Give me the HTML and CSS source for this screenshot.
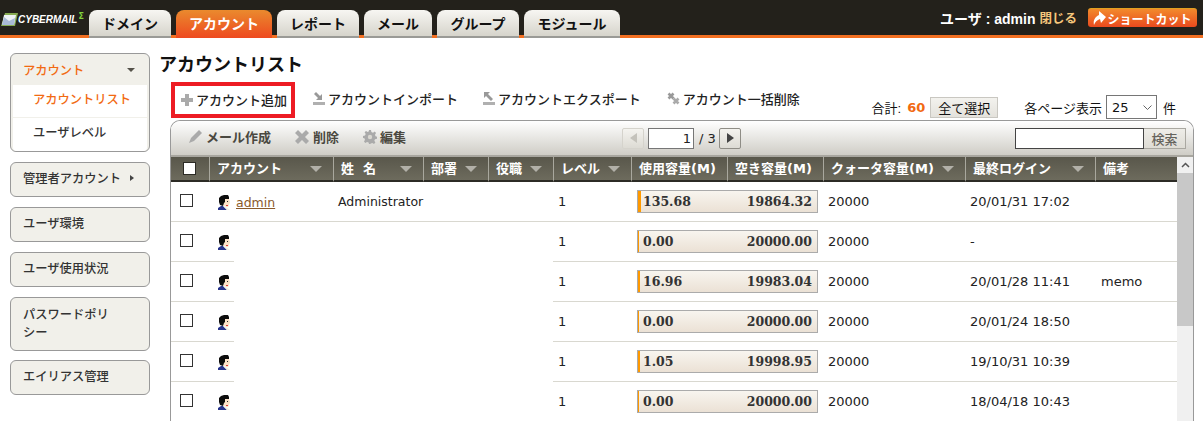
FILE: index.html
```html
<!DOCTYPE html>
<html lang="ja">
<head>
<meta charset="utf-8">
<title>アカウントリスト</title>
<link rel="stylesheet" href="styles.css">
</head>
<body>
<div class="page">
  <header class="topbar">
    <div class="logo">
      <svg class="logo-mark" width="17" height="14" viewBox="0 0 17 14"><path d="M4 0h13l-3 13H0z" fill="#86ab52"/><path d="M3 2h12l-2 10H1z" fill="#eef2f6"/><path d="M1 12L3 4l5 4 6-3-1 7z" fill="#a9bad6"/></svg>
      <span class="logo-text">CYBERMAIL</span><span class="logo-sigma">Σ</span>
    </div>
    <nav class="tabs">
      <a class="tab tab-w82">ドメイン</a>
      <a class="tab tab-w96 active">アカウント</a>
      <a class="tab tab-w82">レポート</a>
      <a class="tab tab-w68">メール</a>
      <a class="tab tab-w82">グループ</a>
      <a class="tab tab-w96">モジュール</a>
    </nav>
    <div class="userbox">
      <span class="username">ユーザ : admin</span>
      <a class="logout">閉じる</a>
      <a class="shortcut">
        <svg width="13" height="14" viewBox="0 0 13 14"><path d="M1 14C0 9 2 6 6 4V0l7 6-5 6-1-4C4 9 2 11 1 14z" fill="#fff"/></svg>
        ショートカット
      </a>
    </div>
  </header>

  <div class="layout">
    <aside class="sidebar">
      <div class="side-group">
        <div class="side-head current"><span>アカウント</span><i class="caret-down"></i></div>
        <a class="side-sub current">アカウントリスト</a>
        <a class="side-sub">ユーザレベル</a>
      </div>
      <div class="side-group side-btn">管理者アカウント<i class="caret-right"></i></div>
      <div class="side-group side-btn">ユーザ環境</div>
      <div class="side-group side-btn">ユーザ使用状況</div>
      <div class="side-group side-btn side-tall">パスワードポリシー</div>
      <div class="side-group side-btn side-last">エイリアス管理</div>
    </aside>

    <main class="main">
      <h1 class="title">アカウントリスト</h1>
      <div class="actions-row">
        <div class="actions">
          <a class="action action-add">
            <svg width="12" height="12" viewBox="0 0 12 12"><path d="M4 0h4v4h4v4H8v4H4V8H0V4h4z" fill="#aaa"/></svg>アカウント追加
          </a>
          <a class="action">
            <svg width="12" height="13" viewBox="0 0 12 13"><path d="M1 2L3 0l4 4 2-2v6H3l2-2z" fill="#999"/><rect y="10" width="12" height="3" fill="#b0b0b0"/></svg>アカウントインポート
          </a>
          <a class="action">
            <svg width="12" height="13" viewBox="0 0 12 13"><path d="M1 0h6L5 2l5 5-2 2-5-5-2 2z" fill="#999"/><rect y="10" width="12" height="3" fill="#b0b0b0"/></svg>アカウントエクスポート
          </a>
          <a class="action">
            <svg width="13" height="13" viewBox="0 0 13 13"><path d="M1.500 1.500l5 5M6.500 1.500l-5 5" stroke="#999" stroke-width="2.600" fill="none"/><path d="M6.500 6.500l5 5M11.500 6.500l-5 5" stroke="#aaa" stroke-width="2.600" fill="none"/></svg>アカウント一括削除
          </a>
        </div>
        <div class="totals">
          <span class="total-label">合計:</span><b class="total-num">60</b>
          <button class="select-all">全て選択</button>
          <label class="per-page">各ページ表示</label>
          <span class="select-wrap">
            <select class="page-size"><option>25</option></select>
            <svg class="chevron" width="9" height="5" viewBox="0 0 9 5"><path d="M.5.500l4 4 4-4" fill="none" stroke="#666"/></svg>
          </span>
          <span class="unit">件</span>
        </div>
      </div>

      <section class="panel">
        <div class="panel-tools">
          <div class="tools-left">
            <a class="tool tool-mail"><svg width="15" height="15" viewBox="0 0 15 15"><path d="M11 1l3 3-8 8-5 2 2-5z" fill="#aaa"/></svg>メール作成</a>
            <a class="tool tool-del"><svg width="14" height="14" viewBox="0 0 14 14"><path d="M3 0l4 4 4-4 3 3-4 4 4 4-3 3-4-4-4 4-3-3 4-4-4-4z" fill="#aaa"/></svg>削除</a>
            <a class="tool"><svg width="14" height="14" viewBox="0 0 14 14"><path d="M6 0h2l.4 2 1.600.7L11.800 1.600 13 3l-1 1.700.5 1.500 1.500.600v2l-2 .4-.7 1.600 1.100 1.800L11 14l-1.700-1-1.500.5L7.200 14H6l-.4-1.500-1.600-.6-1.700 1L1 11.500l1-1.700L1.400 8.300 0 8V6l2-.4.700-1.600L1.600 2.200 3 1l1.700 1 1-.5z" fill="#aaa"/><circle cx="7" cy="7" r="2.200" fill="#dad8d1"/></svg>編集</a>
          </div>
          <div class="pager">
            <button class="page-btn disabled"><i class="tri-left"></i></button>
            <input class="page-input" value="1">
            <span class="page-total">/ 3</span>
            <button class="page-btn"><i class="tri-right"></i></button>
          </div>
          <div class="search">
            <input class="search-input">
            <button class="search-btn">検索</button>
          </div>
        </div>

        <div class="grid">
          <table class="list">
            <colgroup>
              <col class="c-check"><col class="c-account"><col class="c-name"><col class="c-dept"><col class="c-role"><col class="c-level"><col class="c-used"><col class="c-free"><col class="c-quota"><col class="c-login"><col class="c-memo">
            </colgroup>
            <thead>
              <tr>
                <th class="th-check"><input type="checkbox" class="check check-head"></th>
                <th><div class="th-in">アカウント<i class="sort"></i></div></th>
                <th><div class="th-in">姓&nbsp;&nbsp;名<i class="sort"></i></div></th>
                <th><div class="th-in">部署<i class="sort"></i></div></th>
                <th><div class="th-in">役職<i class="sort"></i></div></th>
                <th><div class="th-in">レベル<i class="sort"></i></div></th>
                <th><div class="th-in">使用容量(M)</div></th>
                <th><div class="th-in">空き容量(M)</div></th>
                <th><div class="th-in">クォータ容量(M)<i class="sort"></i></div></th>
                <th><div class="th-in">最終ログイン<i class="sort"></i></div></th>
                <th><div class="th-in">備考</div></th>
              </tr>
            </thead>
            <tbody>
              <tr>
                <td class="td-check"><input type="checkbox" class="check"></td>
                <td class="td-account"><svg class="person" width="13" height="15" viewBox="0 0 13 15"><use href="#person"/></svg><a class="user-link">admin</a></td>
                <td class="td-name">Administrator</td><td></td><td></td>
                <td class="td-level">1</td>
                <td colspan="2" class="td-bar"><div class="bar"><i class="bar-fill" style="width:3px"></i><span>135.68</span><span>19864.32</span></div></td>
                <td class="td-quota">20000</td><td class="td-login">20/01/31 17:02</td><td class="td-memo"></td>
              </tr>
              <tr>
                <td class="td-check"><input type="checkbox" class="check"></td>
                <td class="td-account masked"><svg class="person" width="13" height="15" viewBox="0 0 13 15"><use href="#person"/></svg></td>
                <td class="blank"></td><td class="blank"></td><td class="blank"></td>
                <td class="td-level">1</td>
                <td colspan="2" class="td-bar"><div class="bar"><i class="bar-fill" style="width:1px"></i><span>0.00</span><span>20000.00</span></div></td>
                <td class="td-quota">20000</td><td class="td-login">-</td><td class="td-memo"></td>
              </tr>
              <tr>
                <td class="td-check"><input type="checkbox" class="check"></td>
                <td class="td-account masked"><svg class="person" width="13" height="15" viewBox="0 0 13 15"><use href="#person"/></svg></td>
                <td class="blank"></td><td class="blank"></td><td class="blank"></td>
                <td class="td-level">1</td>
                <td colspan="2" class="td-bar"><div class="bar"><i class="bar-fill" style="width:2px"></i><span>16.96</span><span>19983.04</span></div></td>
                <td class="td-quota">20000</td><td class="td-login">20/01/28 11:41</td><td class="td-memo">memo</td>
              </tr>
              <tr>
                <td class="td-check"><input type="checkbox" class="check"></td>
                <td class="td-account masked"><svg class="person" width="13" height="15" viewBox="0 0 13 15"><use href="#person"/></svg></td>
                <td class="blank"></td><td class="blank"></td><td class="blank"></td>
                <td class="td-level">1</td>
                <td colspan="2" class="td-bar"><div class="bar"><i class="bar-fill" style="width:1px"></i><span>0.00</span><span>20000.00</span></div></td>
                <td class="td-quota">20000</td><td class="td-login">20/01/24 18:50</td><td class="td-memo"></td>
              </tr>
              <tr>
                <td class="td-check"><input type="checkbox" class="check"></td>
                <td class="td-account masked"><svg class="person" width="13" height="15" viewBox="0 0 13 15"><use href="#person"/></svg></td>
                <td class="blank"></td><td class="blank"></td><td class="blank"></td>
                <td class="td-level">1</td>
                <td colspan="2" class="td-bar"><div class="bar"><i class="bar-fill" style="width:2px"></i><span>1.05</span><span>19998.95</span></div></td>
                <td class="td-quota">20000</td><td class="td-login">19/10/31 10:39</td><td class="td-memo"></td>
              </tr>
              <tr>
                <td class="td-check"><input type="checkbox" class="check"></td>
                <td class="td-account masked"><svg class="person" width="13" height="15" viewBox="0 0 13 15"><use href="#person"/></svg></td>
                <td class="blank"></td><td class="blank"></td><td class="blank"></td>
                <td class="td-level">1</td>
                <td colspan="2" class="td-bar"><div class="bar"><i class="bar-fill" style="width:1px"></i><span>0.00</span><span>20000.00</span></div></td>
                <td class="td-quota">20000</td><td class="td-login">18/04/18 10:43</td><td class="td-memo"></td>
              </tr>
            </tbody>
          </table>
          <div class="scrollbar">
            <div class="scroll-up"><svg width="9" height="6" viewBox="0 0 9 6"><path d="M1 5l3.500-3.500L8 5" fill="none" stroke="#555" stroke-width="1.500"/></svg></div>
            <div class="scroll-thumb"></div>
          </div>
        </div>
      </section>
    </main>
  </div>
</div>
<svg class="defs" width="0" height="0">
  <symbol id="person" viewBox="0 0 13 15">
    <path d="M6 4h5l1 3-1 3-1 2H8l-3-2z" fill="#fde3c8"/>
    <path d="M0 15v-2l3-2h2l3 3 1 1z" fill="#27348b"/>
    <path d="M5 11l3 1 4 3H9z" fill="#f4f1e6"/>
    <path d="M2 10L1 7V3l2-2 3-1h4l1 2v2H7v3L6 8l-1 3z" fill="#0c0c0c"/>
    <rect x="8" y="10" width="2" height="1" fill="#e0413a"/>
    <rect x="9" y="6" width="1" height="1" fill="#222"/>
  </symbol>
</svg>
</body>
</html>
```
FILE: styles.css
```css
* { box-sizing: border-box; }
html, body { margin: 0; height: 100%; overflow: hidden; background: #fff; }
body {
  font-family: "DejaVu Sans", "Noto Sans CJK JP", sans-serif;
  font-size: 13px;
  color: #222;
}
a { color: inherit; text-decoration: none; }
i { display: block; font-style: normal; }
.page { height: 421px; overflow: hidden; }
.defs { position: absolute; }

/* top bar */
.topbar {
  height: 38px;
  background: #23211b;
  border-bottom: 3px solid #f26f21;
  display: flex;
  align-items: flex-end;
}
.logo { width: 89px; height: 25px; display: flex; align-items: flex-start; flex: none; padding: 3px 0 0 1px; overflow: hidden; }
.logo-mark { flex: none; }
.logo-text {
  font: italic bold 10px/14px "Liberation Sans", sans-serif;
  color: #fff;
  letter-spacing: 0;
  margin-left: 0;
}
.logo-sigma { font: bold 8px/8px "DejaVu Sans", sans-serif; color: #7fd13b; margin-left: 1px; margin-top: 0; }
.tabs { display: flex; gap: 5px; height: 28px; margin-bottom: -3px; }
.tab {
  height: 28px;
  border-radius: 8px 8px 0 0;
  background: linear-gradient(#f7f6f2, #d6d4cb);
  border-bottom: 2px solid #9a9a96;
  font-family: "Noto Sans CJK JP", sans-serif;
  font-size: 14px;
  font-weight: 700;
  line-height: 26px;
  text-align: center;
  color: #111;
}
.tab-w82 { width: 82px; }
.tab-w96 { width: 96px; }
.tab-w68 { width: 68px; }
.tab.active { background: linear-gradient(#ea8a2e, #ee4a20); color: #fff; border-bottom: 0; }
.userbox { margin-left: auto; height: 35px; display: flex; align-items: center; padding-right: 6px; }
.username { color: #fff; font-weight: 700; font-family: "Liberation Sans", "Noto Sans CJK JP", sans-serif; font-size: 14px; }
.logout { color: #f5c67c; font-family: "Noto Sans CJK JP", sans-serif; font-size: 12.500px; font-weight: 700; margin-left: 4px; }
.shortcut {
  margin-left: 11px;
  width: 109px;
  height: 19px;
  border-radius: 3px;
  border-top: 1px solid #e0a020;
  background: linear-gradient(#f28a2c, #ea4a1e);
  color: #fff;
  font-family: "Noto Sans CJK JP", sans-serif;
  font-size: 12px;
  font-weight: 700;
  display: flex;
  align-items: center;
  justify-content: center;
  gap: 1px;
  white-space: nowrap;
}

/* layout */
.layout { display: flex; align-items: flex-start; }
.sidebar { width: 140px; margin: 15px 0 0 10px; flex: none; display: flex; flex-direction: column; gap: 10px; }
.side-group {
  border: 1px solid #999;
  border-radius: 6px;
  background: #f1f0ea;
  font-family: "Noto Sans CJK JP", sans-serif;
  font-size: 12.250px;
  font-weight: 500;
  color: #333;
}
.side-head { height: 31px; display: flex; align-items: center; justify-content: space-between; padding: 0 12px; }
.current { color: #f26a12; }
.caret-down { width: 0; height: 0; border: 4px solid transparent; border-top: 4px solid #55524a; border-bottom: 0; margin-right: 2px; }
.side-sub { display: block; height: 32px; margin: 0 2px; background: #fff; line-height: 29px; padding-left: 20px; }
.side-sub + .side-sub { margin-top: 1px; height: 33px; line-height: 28px; border-radius: 0 0 4px 4px; }
.side-btn { height: 35px; display: flex; align-items: center; padding: 0 12px 3px; }
.caret-right { width: 0; height: 0; border: 3px solid transparent; border-left: 4px solid #444; border-right: 0; margin-left: 9px; }
.side-tall { height: 54px; padding-right: 34px; line-height: 18px; }
.side-last { margin-top: -1px; }

.main { margin-left: 10px; flex: none; width: 1034px; }
.title {
  margin: 14px 0 0;
  height: 30px;
  font-family: "Noto Sans CJK JP", sans-serif;
  font-size: 18px;
  line-height: 22px;
  font-weight: 700;
  color: #111;
  text-indent: -1px;
}
.actions-row { display: flex; justify-content: space-between; align-items: flex-end; height: 38px; padding-left: 11px; }
.actions { display: flex; gap: 25px; height: 36px; align-self: flex-start; }
.action {
  display: flex;
  align-items: center;
  gap: 3px;
  padding-bottom: 3px;
  font-family: "Noto Sans CJK JP", sans-serif;
  font-size: 13px;
  font-weight: 500;
  color: #222;
  white-space: nowrap;
}
.action:last-child { margin-left: 1px; }
.action-add { width: 124px; border: 4px solid #ed1c24; padding: 0 0 1px 6px; margin-right: -7px; }
.totals {
  display: flex;
  align-items: center;
  font-family: "Liberation Sans", "Noto Sans CJK JP", sans-serif;
  font-size: 13px;
  height: 24px;
  margin-bottom: 1px;
  padding-right: 18px;
  color: #111;
}
.total-num { color: #f26a12; font: 700 13px "DejaVu Sans", sans-serif; margin-left: 6px; }
.select-all {
  margin-left: 5px;
  width: 68px;
  height: 21px;
  padding: 0;
  border: 1px solid #c9c7c1;
  background: linear-gradient(#f3f2ee, #e4e2dc);
  font: 13px "Noto Sans CJK JP", sans-serif;
  color: #111;
}
.per-page { margin-left: 26px; white-space: nowrap; }
.select-wrap { position: relative; display: block; width: 51px; height: 24px; margin-left: 4px; }
.page-size { appearance: none; display: block; width: 51px; height: 24px; border: 1px solid #767676; border-radius: 0; background: #fff; font: 13px "DejaVu Sans", sans-serif; padding-left: 5px; color: #111; }
.chevron { position: absolute; right: 5px; top: 10px; }
.unit { margin-left: 6px; }

/* panel */
.panel {
  margin-left: 10px;
  width: 1024px;
  height: 320px;
  border: 1px solid #999;
  border-bottom: 0;
  border-radius: 10px 10px 0 0;
  overflow: hidden;
}
.panel-tools {
  height: 36px;
  background: linear-gradient(#fff, #cfcdc6);
  display: grid;
  grid-template-columns: 1fr auto 1fr;
  align-items: center;
  border-bottom: 2px solid #a8a69f;
}
.tools-left { display: flex; padding: 0 0 3px 17px; gap: 24px; }
.tool {
  display: flex;
  align-items: center;
  gap: 3px;
  font-family: "Noto Sans CJK JP", sans-serif;
  font-size: 13px;
  font-weight: 700;
  color: #4a4840;
  white-space: nowrap;
}
.tool-del { gap: 4px; }
.pager { display: flex; align-items: center; margin-left: -1px; }
.page-btn {
  width: 22px;
  height: 21px;
  padding: 0;
  border: 1px solid #8f8d86;
  border-radius: 2px;
  background: linear-gradient(#f4f3ef, #dddbd4);
  display: flex;
  align-items: center;
  justify-content: center;
}
.page-btn.disabled { border-color: #d5d3cc; }
.tri-left { width: 0; height: 0; border: 5px solid transparent; border-right: 7px solid #c4c2bb; border-left: 0; }
.tri-right { width: 0; height: 0; border: 5px solid transparent; border-left: 7px solid #444; border-right: 0; }
.page-input {
  width: 46px;
  height: 21px;
  margin-left: 4px;
  border: 1px solid #767676;
  background: #fff;
  padding: 0 2px;
  text-align: right;
  font: 13px "DejaVu Sans", sans-serif;
  color: #222;
}
.page-total { margin: 0 3px 0 5px; font-size: 13px; width: 17px; white-space: nowrap; }
.search { display: flex; justify-content: flex-end; padding-right: 7px; }
.search-input { width: 129px; height: 21px; border: 1px solid #444; background: #fff; padding: 0; }
.search-btn {
  width: 42px;
  height: 21px;
  padding: 0;
  border: 1px solid #aaa8a1;
  border-left: 0;
  background: linear-gradient(#eeede8, #dedcd5);
  font: 13px "Noto Sans CJK JP", sans-serif;
  font-weight: 500;
  color: #66645d;
}

/* table */
.grid { display: flex; height: 284px; overflow: hidden; }
.list { table-layout: fixed; width: 1006px; border-collapse: separate; border-spacing: 0; flex: none; align-self: flex-start; }
.c-check { width: 38px; }
.c-account { width: 124px; }
.c-name { width: 90px; }
.c-dept { width: 65px; }
.c-role { width: 65px; }
.c-level { width: 78px; }
.c-used { width: 96px; }
.c-free { width: 96px; }
.c-quota { width: 142px; }
.c-login { width: 130px; }
.c-memo { width: 82px; }
.list th {
  height: 25px;
  padding: 0;
  background: linear-gradient(#59574b, #6d6b5d);
  border-bottom: 2px solid #2c2b25;
  border-left: 1px solid #a9a89e;
  color: #fff;
  font-family: "DejaVu Sans", "Noto Sans CJK JP", sans-serif;
  font-size: 13px;
  font-weight: 700;
  text-align: left;
}
.list th.th-check { border-left: 0; padding-left: 12px; }
.th-in { display: flex; justify-content: space-between; align-items: center; padding: 0 11px 2px 7px; white-space: nowrap; }
.sort { width: 0; height: 0; border: 6px solid transparent; border-top: 6px solid #b2b0a8; border-bottom: 0; flex: none; margin-top: 2px; }
.list td {
  height: 40px;
  padding: 0;
  border-bottom: 1px solid #d9d8d0;
  white-space: nowrap;
  color: #222;
}
.check { appearance: none; width: 13px; height: 13px; margin: 0; border: 1px solid #333; background: #fff; display: block; }
.check-head { border-color: #2c2b25; }
.list td.td-check { padding-left: 9px; }
.td-check .check { margin-top: -3px; }
.list td.td-account { padding-left: 9px; }
.person { display: inline-block; vertical-align: middle; margin-right: 5px; }
.user-link { color: #8a5a2b; font-size: 12.500px; text-decoration: underline; vertical-align: middle; }
.list td.td-name { padding-left: 5px; font-size: 12.500px; }
.list td.td-level { padding-left: 5px; }
.list td.td-bar { padding-left: 6px; }
.bar {
  position: relative;
  width: 181px;
  height: 23px;
  border: 1px solid #ababab;
  background: linear-gradient(#f8f5ef, #ebe1d5);
  display: flex;
  justify-content: space-between;
  align-items: center;
  padding: 0 5px;
  font: 700 12.500px "DejaVu Serif", serif;
  color: #333;
}
.bar-fill { position: absolute; left: 0; top: 0; bottom: 0; background: #f90; }
.list td.td-quota { padding-left: 5px; }
.list td.td-login { padding-left: 5px; }
.list td.td-memo { padding-left: 6px; }
.list td.blank { border-bottom-color: #fff; }
.list td.masked {
  border-bottom-color: transparent;
  background: linear-gradient(#d9d8d0, #d9d8d0) left bottom / 25px 1px no-repeat;
  background-origin: border-box;
  background-clip: border-box;
}

.scrollbar { width: 16px; flex: none; background: #f0f0f0; height: 284px; }
.scroll-up { height: 16px; display: flex; align-items: center; justify-content: center; }
.scroll-thumb { height: 153px; background: #c8c8c8; }
```
